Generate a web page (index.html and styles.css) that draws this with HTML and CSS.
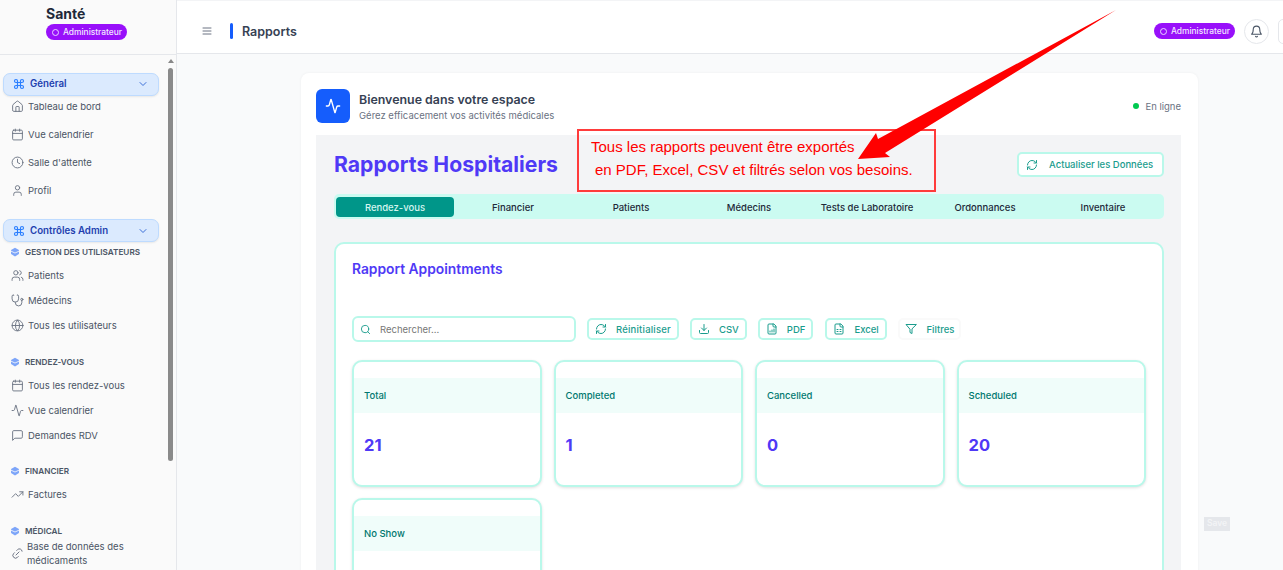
FILE: index.html
```html
<html>
  <head>
    <meta charset="utf-8">
    <title>Santé - Rapports</title>
    <link rel="stylesheet" href="styles.css">
  </head>
  <body>
    <svg class="icon-defs" width="0" height="0">
      <symbol id="i-command" viewBox="0 0 24 24"><path d="M15 6v12a3 3 0 1 0 3-3H6a3 3 0 1 0 3 3V6a3 3 0 1 0-3 3h12a3 3 0 1 0-3-3"/></symbol>
      <symbol id="i-chevron" viewBox="0 0 24 24"><path d="m6 9 6 6 6-6"/></symbol>
      <symbol id="i-house" viewBox="0 0 24 24"><path d="M15 21v-8a1 1 0 0 0-1-1h-4a1 1 0 0 0-1 1v8"/><path d="M3 10a2 2 0 0 1 .709-1.528l7-5.999a2 2 0 0 1 2.582 0l7 5.999A2 2 0 0 1 21 10v9a2 2 0 0 1-2 2H5a2 2 0 0 1-2-2z"/></symbol>
      <symbol id="i-calendar" viewBox="0 0 24 24"><path d="M8 2v4M16 2v4M3 10h18"/><rect x="3" y="4" width="18" height="18" rx="2"/></symbol>
      <symbol id="i-clock" viewBox="0 0 24 24"><circle cx="12" cy="12" r="10"/><path d="M12 6v6l4 2"/></symbol>
      <symbol id="i-user" viewBox="0 0 24 24"><path d="M19 21v-2a4 4 0 0 0-4-4H9a4 4 0 0 0-4 4v2"/><circle cx="12" cy="7" r="4"/></symbol>
      <symbol id="i-users" viewBox="0 0 24 24"><path d="M16 21v-2a4 4 0 0 0-4-4H6a4 4 0 0 0-4 4v2"/><circle cx="9" cy="7" r="4"/><path d="M22 21v-2a4 4 0 0 0-3-3.87M16 3.13a4 4 0 0 1 0 7.75"/></symbol>
      <symbol id="i-stethoscope" viewBox="0 0 24 24"><path d="M4.8 2.3A.3.3 0 1 0 5 2H4a2 2 0 0 0-2 2v5a6 6 0 0 0 12 0V4a2 2 0 0 0-2-2h-1a.2.2 0 1 0 .3.3"/><path d="M8 15v1a6 6 0 0 0 12 0v-4"/><circle cx="20" cy="10" r="2"/></symbol>
      <symbol id="i-globe" viewBox="0 0 24 24"><circle cx="12" cy="12" r="10"/><path d="M12 2a14.5 14.5 0 0 0 0 20 14.5 14.5 0 0 0 0-20M2 12h20"/></symbol>
      <symbol id="i-activity" viewBox="0 0 24 24"><path d="M22 12h-2.48a2 2 0 0 0-1.93 1.46l-2.35 8.36a.25.25 0 0 1-.48 0L9.24 2.18a.25.25 0 0 0-.48 0l-2.35 8.36A2 2 0 0 1 4.49 12H2"/></symbol>
      <symbol id="i-message" viewBox="0 0 24 24"><path d="M21 15a2 2 0 0 1-2 2H7l-4 4V5a2 2 0 0 1 2-2h14a2 2 0 0 1 2 2z"/></symbol>
      <symbol id="i-trending" viewBox="0 0 24 24"><path d="M22 7l-8.5 8.5-5-5L2 17M16 7h6v6"/></symbol>
      <symbol id="i-pill" viewBox="0 0 24 24"><path d="M9 17H7A5 5 0 0 1 7 7h2M15 7h2a5 5 0 0 1 4 8M8 12h8" transform="rotate(-45 12 12)"/></symbol>
      <symbol id="i-refresh" viewBox="0 0 24 24"><path d="M3 12a9 9 0 0 1 9-9 9.75 9.75 0 0 1 6.74 2.74L21 8"/><path d="M21 3v5h-5"/><path d="M21 12a9 9 0 0 1-9 9 9.75 9.75 0 0 1-6.74-2.74L3 16"/><path d="M8 16H3v5"/></symbol>
      <symbol id="i-download" viewBox="0 0 24 24"><path d="M21 15v4a2 2 0 0 1-2 2H5a2 2 0 0 1-2-2v-4M7 10l5 5 5-5M12 15V3"/></symbol>
      <symbol id="i-file-chart" viewBox="0 0 24 24"><path d="M15 2H6a2 2 0 0 0-2 2v16a2 2 0 0 0 2 2h12a2 2 0 0 0 2-2V7Z"/><path d="M14 2v4a2 2 0 0 0 2 2h4M8 18v-2M12 18v-4M16 18v-6"/></symbol>
      <symbol id="i-file-sheet" viewBox="0 0 24 24"><path d="M15 2H6a2 2 0 0 0-2 2v16a2 2 0 0 0 2 2h12a2 2 0 0 0 2-2V7Z"/><path d="M14 2v4a2 2 0 0 0 2 2h4M8 13h2M14 13h2M8 17h2M14 17h2"/></symbol>
      <symbol id="i-funnel" viewBox="0 0 24 24"><path d="M22 3H2l8 9.46V19l4 2v-8.54z"/></symbol>
      <symbol id="i-bell" viewBox="0 0 24 24"><path d="M6 8a6 6 0 0 1 12 0c0 7 3 9 3 9H3s3-2 3-9"/><path d="M10.3 21a1.94 1.94 0 0 0 3.4 0"/></symbol>
      <symbol id="i-search" viewBox="0 0 24 24"><circle cx="11" cy="11" r="8"/><path d="m21 21-4.3-4.3"/></symbol>
      <symbol id="i-menu" viewBox="0 0 24 24"><path d="M4 6h16M4 12h16M4 18h16"/></symbol>
      <symbol id="i-layers" viewBox="0 0 24 24"><path class="sec-fill" d="M12 1.5 21.5 7v10L12 22.5 2.5 17V7z"/><path class="sec-cut" d="M2.5 10 12 14.5 21.5 10"/></symbol>
    </svg>

    <div class="app">
      <aside class="sidebar">
        <div class="brand">
          <div class="brand-name">Santé</div>
          <div class="role-badge"><span class="role-dot"></span>Administrateur</div>
        </div>
        <nav class="side-nav">
          <div class="group-btn group-general">
            <svg class="ico ico-cmd"><use href="#i-command"/></svg><span>Général</span>
            <svg class="ico ico-chev"><use href="#i-chevron"/></svg>
          </div>
          <div class="nav-list">
            <a class="nav-item"><svg class="ico"><use href="#i-house"/></svg>Tableau de bord</a>
            <a class="nav-item"><svg class="ico"><use href="#i-calendar"/></svg>Vue calendrier</a>
            <a class="nav-item"><svg class="ico"><use href="#i-clock"/></svg>Salle d'attente</a>
            <a class="nav-item"><svg class="ico"><use href="#i-user"/></svg>Profil</a>
          </div>
          <div class="group-btn group-admin">
            <svg class="ico ico-cmd"><use href="#i-command"/></svg><span>Contrôles Admin</span>
            <svg class="ico ico-chev"><use href="#i-chevron"/></svg>
          </div>
          <div class="nav-section nav-section-first">
            <div class="section-title"><svg class="ico-sec"><use href="#i-layers"/></svg>GESTION DES UTILISATEURS</div>
            <a class="nav-item"><svg class="ico"><use href="#i-users"/></svg>Patients</a>
            <a class="nav-item"><svg class="ico"><use href="#i-stethoscope"/></svg>Médecins</a>
            <a class="nav-item"><svg class="ico"><use href="#i-globe"/></svg>Tous les utilisateurs</a>
          </div>
          <div class="nav-section">
            <div class="section-title"><svg class="ico-sec"><use href="#i-layers"/></svg>RENDEZ-VOUS</div>
            <a class="nav-item"><svg class="ico"><use href="#i-calendar"/></svg>Tous les rendez-vous</a>
            <a class="nav-item"><svg class="ico"><use href="#i-activity"/></svg>Vue calendrier</a>
            <a class="nav-item"><svg class="ico"><use href="#i-message"/></svg>Demandes RDV</a>
          </div>
          <div class="nav-section">
            <div class="section-title"><svg class="ico-sec"><use href="#i-layers"/></svg>FINANCIER</div>
            <a class="nav-item"><svg class="ico"><use href="#i-trending"/></svg>Factures</a>
          </div>
          <div class="nav-section">
            <div class="section-title"><svg class="ico-sec"><use href="#i-layers"/></svg>MÉDICAL</div>
            <a class="nav-item nav-item-long"><svg class="ico"><use href="#i-pill"/></svg><span>Base de données des médicaments</span></a>
          </div>
        </nav>
        <div class="scrollbar">
          <div class="scroll-arrow"></div>
          <div class="scroll-thumb"></div>
        </div>
      </aside>

      <div class="main">
        <header class="topbar">
          <svg class="ico ico-menu"><use href="#i-menu"/></svg>
          <div class="page-mark"></div>
          <div class="page-title">Rapports</div>
          <div class="topbar-right">
            <div class="role-badge role-badge-top"><span class="role-dot"></span>Administrateur</div>
            <div class="bell-btn"><svg class="ico"><use href="#i-bell"/></svg></div>
            <div class="user-btn"></div>
          </div>
        </header>

        <div class="content">
          <div class="welcome-card">
            <div class="welcome-head">
              <div class="welcome-icon"><svg><use href="#i-activity"/></svg></div>
              <div class="welcome-text">
                <div class="welcome-title">Bienvenue dans votre espace</div>
                <div class="welcome-sub">Gérez efficacement vos activités médicales</div>
              </div>
              <div class="status"><span class="status-dot"></span>En ligne</div>
            </div>

            <div class="reports">
              <div class="reports-head">
                <h1>Rapports Hospitaliers</h1>
                <button class="btn btn-refresh"><svg class="ico"><use href="#i-refresh"/></svg>Actualiser les Données</button>
              </div>
              <div class="tabs">
                <div class="tab active">Rendez-vous</div>
                <div class="tab">Financier</div>
                <div class="tab">Patients</div>
                <div class="tab">Médecins</div>
                <div class="tab">Tests de Laboratoire</div>
                <div class="tab">Ordonnances</div>
                <div class="tab">Inventaire</div>
              </div>
              <div class="report-card">
                <h2>Rapport Appointments</h2>
                <div class="toolbar">
                  <div class="search"><svg class="ico"><use href="#i-search"/></svg><span>Rechercher...</span></div>
                  <button class="btn btn-reset"><svg class="ico"><use href="#i-refresh"/></svg>Réinitialiser</button>
                  <button class="btn"><svg class="ico"><use href="#i-download"/></svg>CSV</button>
                  <button class="btn"><svg class="ico"><use href="#i-file-chart"/></svg>PDF</button>
                  <button class="btn btn-excel"><svg class="ico"><use href="#i-file-sheet"/></svg>Excel</button>
                  <button class="btn btn-plain"><svg class="ico"><use href="#i-funnel"/></svg>Filtres</button>
                </div>
                <div class="stats">
                  <div class="stat"><div class="stat-label">Total</div><div class="stat-value">21</div></div>
                  <div class="stat"><div class="stat-label">Completed</div><div class="stat-value">1</div></div>
                  <div class="stat"><div class="stat-label">Cancelled</div><div class="stat-value">0</div></div>
                  <div class="stat"><div class="stat-label">Scheduled</div><div class="stat-value">20</div></div>
                  <div class="stat"><div class="stat-label">No Show</div><div class="stat-value"></div></div>
                </div>
              </div>
            </div>
          </div>
        </div>
      </div>
    </div>

    <div class="save-chip">Save</div>
    <div class="note">
      <div>Tous les rapports peuvent être exportés</div>
      <div class="note-second">en PDF, Excel, CSV et filtrés selon vos besoins.</div>
    </div>
    <svg class="arrow" width="1283" height="570"><polygon points="1116,10 878,139 876,133 858,159 890,157 885,153"/></svg>
  </body>
</html>
```

FILE: styles.css
```css
* {
  box-sizing: border-box;
}
html, body {
  margin: 0;
  padding: 0;
  height: 100%;
  overflow: hidden;
}
body {
  font-family: Inter, "Noto Sans", sans-serif;
  background: #f9fafb;
  color: #364153;
  position: relative;
}
.icon-defs {
  position: absolute;
}
svg {
  fill: none;
  stroke: currentColor;
  stroke-width: 2;
  stroke-linecap: round;
  stroke-linejoin: round;
}
.ico {
  width: 12px;
  height: 12px;
  flex-shrink: 0;
}
.app {
  display: flex;
  height: 570px;
  overflow: hidden;
}

/* sidebar */
.sidebar {
  width: 177px;
  flex-shrink: 0;
  background: #fafafa;
  border-right: 1px solid #e5e7eb;
  position: relative;
  overflow: hidden;
}
.brand {
  height: 55px;
  padding: 6px 0 0 46px;
  border-bottom: 1px solid #e5e7eb;
}
.brand-name {
  font-size: 14px;
  font-weight: 700;
  line-height: 15px;
  color: #1e2939;
}
.role-badge {
  display: inline-flex;
  align-items: center;
  height: 16px;
  margin-top: 3px;
  padding: 0 5px 0 6px;
  gap: 4px;
  border-radius: 9px;
  background: #9810fa;
  color: #f3e8ff;
  font-size: 8.4px;
  font-weight: 500;
  white-space: nowrap;
}
.role-dot {
  width: 7px;
  height: 7px;
  border: 1px solid #e9d5ff;
  border-radius: 50%;
  margin-top: 1px;
}
.side-nav {
  padding: 18px 0 0 3px;
  width: 160px;
}
.group-btn {
  display: flex;
  align-items: center;
  height: 23px;
  padding: 0 9px;
  gap: 5px;
  width: 156px;
  background: #dbeafe;
  border: 1px solid #bedbff;
  border-radius: 7px;
  font-size: 9.7px;
  font-weight: 600;
  color: #1e40af;
  box-shadow: 0 1px 2px rgba(0, 0, 0, 0.08);
}
.group-btn .ico-cmd {
  color: #2b7fff;
  width: 12px;
  height: 12px;
  stroke-width: 2.4;
}
.group-btn .ico-chev {
  margin-left: auto;
  color: #3b6fd8;
  width: 12px;
  height: 12px;
}
.group-general {
  padding-bottom: 2px;
}
.group-admin {
  margin-top: 15px;
}
.nav-item {
  display: flex;
  align-items: center;
  height: 25px;
  padding-left: 7.5px;
  gap: 4.5px;
  font-size: 9.5px;
  color: #4a5565;
  white-space: nowrap;
}
.nav-item .ico {
  width: 13px;
  height: 13px;
  color: #6a7282;
  stroke-width: 1.7;
}
.nav-list {
  margin-top: -4px;
}
.nav-list .nav-item {
  height: 28px;
}
.nav-section {
  margin-bottom: 12.5px;
}
.nav-section-first {
  margin-top: -1px;
}
.section-title {
  display: flex;
  align-items: center;
  height: 22px;
  padding-left: 7px;
  gap: 5px;
  font-size: 8.2px;
  font-weight: 600;
  color: #4a5565;
  white-space: nowrap;
}
.ico-sec {
  width: 10px;
  height: 10px;
  flex-shrink: 0;
}
.sec-fill {
  fill: #7da5f9;
  stroke: none;
}
.sec-cut {
  stroke: #fafafa;
  stroke-width: 2;
}
.nav-item-long {
  height: 24px;
  white-space: normal;
  line-height: 14px;
  gap: 3.5px;
}
.scrollbar {
  position: absolute;
  top: 56px;
  left: 166px;
  width: 10px;
  height: 514px;
  background: #fafafa;
}
.scroll-arrow {
  width: 0;
  height: 0;
  margin: 3px auto 0;
  border-left: 3px solid transparent;
  border-right: 3px solid transparent;
  border-bottom: 4px solid #888;
}
.scroll-thumb {
  width: 5px;
  height: 393px;
  margin: 5px 0 0 2px;
  background: #8a8a8a;
  border-radius: 3px;
}

/* top bar */
.main {
  flex: 1;
  min-width: 0;
}
.topbar {
  display: flex;
  align-items: center;
  height: 54px;
  padding: 8px 0 0 24px;
  background: #fff;
  border-top: 1px solid #f3f4f6;
  border-bottom: 1px solid #e5e7eb;
}
.ico-menu {
  color: #6a7282;
}
.page-mark {
  width: 3px;
  height: 16px;
  margin-left: 17px;
  background: #155dfc;
  border-radius: 2px;
}
.page-title {
  margin-left: 9px;
  font-size: 12.5px;
  font-weight: 600;
  color: #364153;
}
.topbar-right {
  display: flex;
  align-items: center;
  margin-left: auto;
  margin-right: -12px;
}
.role-badge-top {
  margin: 0 9px 0 0;
  padding: 0 5px 0 6px;
}
.bell-btn {
  display: flex;
  align-items: center;
  justify-content: center;
  width: 25px;
  height: 25px;
  margin-right: 9px;
  border: 1px solid #e5e7eb;
  border-radius: 50%;
  color: #4a5565;
}
.bell-btn .ico {
  width: 13px;
  height: 13px;
}
.user-btn {
  width: 17px;
  height: 25px;
  border: 1px solid #e5e7eb;
  border-radius: 5px;
}

/* welcome card */
.content {
  padding: 19px 85px 0 124px;
}
.welcome-card {
  background: #fff;
  border-radius: 8px 8px 0 0;
  padding: 16px 17px 0 15px;
  box-shadow: 0 0 3px rgba(0, 0, 0, 0.05);
}
.welcome-head {
  display: flex;
  align-items: center;
  height: 34px;
}
.welcome-icon {
  display: flex;
  align-items: center;
  justify-content: center;
  width: 34px;
  height: 34px;
  background: #155dfc;
  border-radius: 6px;
  color: #fff;
}
.welcome-icon svg {
  width: 16px;
  height: 16px;
}
.welcome-text {
  margin-left: 9px;
  padding-top: 2px;
}
.welcome-title {
  font-size: 12.4px;
  font-weight: 600;
  color: #364153;
  line-height: 16px;
}
.welcome-sub {
  font-size: 9.5px;
  color: #6a7282;
  line-height: 14px;
  margin-top: 1px;
}
.status {
  display: flex;
  align-items: center;
  margin-left: auto;
  gap: 6px;
  font-size: 9.5px;
  color: #6a7282;
}
.status-dot {
  width: 6px;
  height: 6px;
  border-radius: 50%;
  background: #00c950;
}

/* reports */
.reports {
  margin-top: 12px;
  padding: 17px 17px 0 18px;
  background: #f3f4f6;
  height: 500px;
}
.reports-head {
  display: flex;
  align-items: center;
  justify-content: space-between;
  height: 25px;
}
.reports-head h1 {
  margin: 0 0 1px;
  font-size: 21.2px;
  font-weight: 700;
  color: #4f39f6;
}
.btn {
  display: inline-flex;
  align-items: center;
  height: 22px;
  padding: 0 6px;
  gap: 9px;
  background: #fff;
  border: 2px solid #b9f8ea;
  border-radius: 5px;
  font-family: inherit;
  font-size: 9.5px;
  font-weight: 500;
  color: #1a9c8d;
  white-space: nowrap;
}
.btn-refresh {
  height: 25px;
  width: 147px;
  padding: 0 7px;
  gap: 11px;
}
.btn-reset {
  width: 92px;
  letter-spacing: 0.2px;
}
.btn-excel {
  width: 62px;
  margin-left: 1px;
}
.btn-plain {
  border-color: #fafafa;
  padding: 0 5px;
}
.tabs {
  display: grid;
  grid-template-columns: repeat(7, 1fr);
  height: 25px;
  margin-top: 17px;
  padding: 3px 2px 2px;
  background: #cbfbf1;
  border-radius: 5px;
}
.tab {
  display: flex;
  align-items: center;
  justify-content: center;
  font-size: 9.5px;
  font-weight: 500;
  color: #1e2939;
  white-space: nowrap;
}
.tab.active {
  background: #009689;
  color: #d5f5ef;
  border-radius: 4px;
}
.report-card {
  margin-top: 23px;
  padding: 16px 16px 0;
  height: 400px;
  background: #fff;
  border: 2px solid #b9f8ea;
  border-radius: 10px;
}
.report-card h2 {
  margin: 0;
  font-size: 13.8px;
  line-height: 18px;
  font-weight: 600;
  color: #4f39f6;
}
.toolbar {
  display: flex;
  align-items: center;
  gap: 11px;
  margin-top: 38px;
  height: 26px;
}
.search {
  display: flex;
  align-items: center;
  width: 224px;
  height: 26px;
  padding-left: 6px;
  gap: 9px;
  border: 2px solid #b9f8ea;
  border-radius: 6px;
  font-size: 9.5px;
  color: #777;
}
.search .ico {
  color: #1a9c8d;
  width: 11px;
  height: 11px;
}
.stats {
  display: grid;
  grid-template-columns: repeat(4, 1fr);
  gap: 11px 12px;
  margin-top: 18px;
}
.stat {
  height: 127px;
  padding-top: 16px;
  border: 2px solid #b9f8ea;
  border-radius: 10px;
  background: #fff;
  box-shadow: 0 1px 3px rgba(0, 0, 0, 0.12);
}
.stat-label {
  display: flex;
  align-items: center;
  height: 35px;
  padding-left: 10px;
  background: #f0fdfa;
  font-size: 9.5px;
  font-weight: 500;
  color: #00786f;
}
.stat-value {
  padding: 20px 0 0 10px;
  font-size: 16.5px;
  line-height: 24px;
  font-weight: 700;
  color: #4f39f6;
}

/* annotation laid over the page */
.save-chip {
  position: absolute;
  left: 1204px;
  top: 517px;
  width: 26px;
  height: 14px;
  background: #e5e7eb;
  color: #f3f4f6;
  font-size: 8.5px;
  font-weight: 600;
  line-height: 13px;
  text-align: center;
}
.note {
  position: absolute;
  left: 577px;
  top: 129px;
  width: 359px;
  height: 63px;
  padding: 4px 0 0 12px;
  border: 2px solid #ff3b3b;
  font-family: "Liberation Sans", Arial, sans-serif;
  font-size: 15px;
  line-height: 23px;
  color: #f00;
}
.note-second {
  padding-left: 4px;
}
.arrow {
  position: absolute;
  left: 0;
  top: 0;
  pointer-events: none;
}
.arrow polygon {
  fill: #f00;
  stroke: none;
}
```
